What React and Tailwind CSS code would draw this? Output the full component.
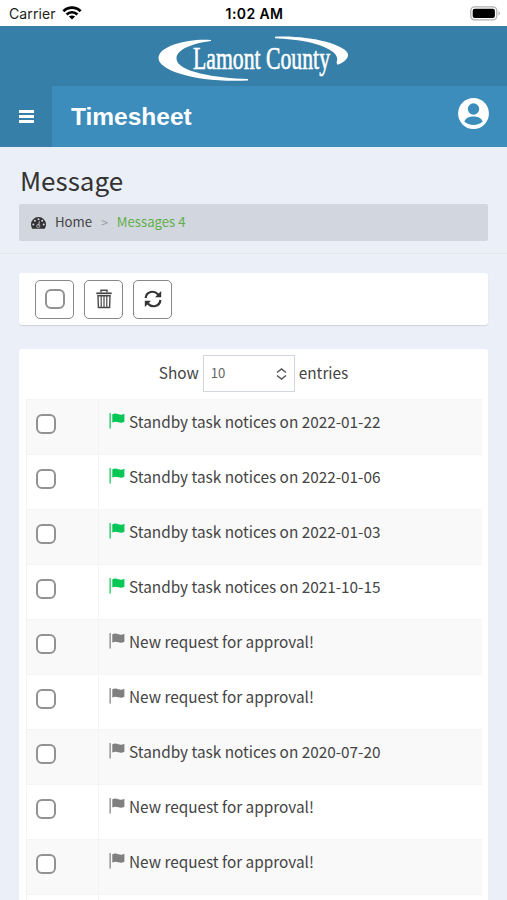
import React from "react";

const messages = [
  { text: "Standby task notices on 2022-01-22", unread: true },
  { text: "Standby task notices on 2022-01-06", unread: true },
  { text: "Standby task notices on 2022-01-03", unread: true },
  { text: "Standby task notices on 2021-10-15", unread: true },
  { text: "New request for approval!" },
  { text: "New request for approval!" },
  { text: "Standby task notices on 2020-07-20" },
  { text: "New request for approval!" },
  { text: "New request for approval!" },
];

function Wifi() {
  return (
    <svg width="20" height="14" viewBox="0 0 20 14" fill="none" stroke="#000" strokeWidth="2.7">
      <path d="M1.4 5.3C6.2 .4 13.8 .4 18.6 5.3" />
      <path d="M4.6 8.5c3-3 7.8-3 10.8 0" />
      <path d="M10 13.6 6.9 10.6c1.8-1.6 4.4-1.6 6.2 0z" fill="#000" stroke="none" />
    </svg>
  );
}

function Battery() {
  return (
    <svg width="31" height="15" viewBox="0 0 31 15">
      <rect x=".8" y=".8" width="26" height="13" rx="3.8" fill="#fff" stroke="#b0b0b0" strokeWidth="1.3" />
      <rect x="2.7" y="2.7" width="22.2" height="9.2" rx="2" fill="#000" />
      <path d="M28.5 5.2c2 .9 2 3.3 0 4.2z" fill="#b0b0b0" />
    </svg>
  );
}

function Logo() {
  return (
    <svg width="192" height="51" viewBox="0 0 192 51" fill="#fff" className="overflow-visible">
      <path d="M53 5C34 3 .5 10 .5 23C.5 36 40 48 90 45.500V44C58 43 18.500 37 18.500 23.500C18.500 14 36 8 53 6Z" />
      <path d="M117 1.700C150 0 187 9 190 19C190.500 23 187 27 179.500 29.800L178.500 27.500C184 17 162 5 117 3.200Z" />
      <text
        x="35"
        y="34.200"
        textLength="137"
        lengthAdjust="spacingAndGlyphs"
        fontSize="31"
        fontFamily="'Liberation Serif', serif"
        stroke="#fff"
        strokeWidth=".6"
      >
        Lamont County
      </text>
    </svg>
  );
}

function UserCircle() {
  return (
    <svg width="31" height="31" viewBox="0 0 31 31">
      <circle cx="15.500" cy="15.500" r="15.400" fill="#fff" />
      <circle cx="15.500" cy="11" r="5.700" fill="#3c8dbc" />
      <path d="M6.300 23.500C8 19.800 11.500 18.600 15.500 18.600s7.500 1.200 9.200 4.900c-4.500 4.600-13.900 4.600-18.400 0z" fill="#3c8dbc" />
    </svg>
  );
}

function Gauge() {
  return (
    <svg width="15" height="12" viewBox="0 0 15 12">
      <path d="M7.500 0A7.400 7.400 0 0 0 0 7.400c0 1.500.4 2.800 1.100 4q.2.400.6.400h11.600q.4 0 .6-.4c.7-1.200 1.100-2.500 1.100-4A7.400 7.400 0 0 0 7.500 0z" fill="#333" />
      <g fill="#d2d6de">
        <circle cx="2.300" cy="7.500" r="1" />
        <circle cx="3.900" cy="3.700" r="1" />
        <circle cx="7.500" cy="2.200" r="1" />
        <circle cx="11.200" cy="3.700" r="1" />
        <circle cx="12.700" cy="7.500" r="1" />
      </g>
      <path d="M8.500 4.300 7.500 8.500" stroke="#d2d6de" strokeWidth=".9" />
      <circle cx="7.300" cy="9" r="1.600" fill="none" stroke="#d2d6de" strokeWidth=".7" />
    </svg>
  );
}

function Trash() {
  return (
    <svg width="16" height="20" viewBox="0 0 16 20" fill="none" stroke="#4a4a4a" strokeWidth="1.400">
      <path d="M5 3.500V1.200h6v2.300" />
      <path d="M.3 4.300h15.400" strokeWidth="1.800" />
      <path d="M2 6.700h12l-.4 11.800h-11.200z" />
      <path d="M5.200 7v11M8 7v11M10.800 7v11" strokeWidth="1.200" />
    </svg>
  );
}

function Refresh() {
  return (
    <svg width="18" height="18" viewBox="0 0 18 18" fill="none" stroke="#333" strokeWidth="2.200">
      <path d="M1.600 8C2.400 1.200 10 -.1 14.200 4.600" />
      <path d="M16.400 10C15.600 16.800 8 18.100 3.800 13.400" />
      <path d="M17.200 1v6.200h-6.200z" fill="#333" stroke="none" />
      <path d="M.8 17v-6.200h6.200z" fill="#333" stroke="none" />
    </svg>
  );
}

function Flag({ unread }) {
  return (
    <svg width="16" height="16" viewBox="0 0 16 16" className={unread ? "text-[#06c755]" : "text-[#808080]"} fill="currentColor">
      <rect x=".4" y="0" width="1.500" height="15.600" opacity=".8" />
      <path d="M3.300 1.300C5.500.2 7.500.5 9.300 1.200c2 .7 4 .7 6.100-.4v8c-2 1.100-4.100 1.100-6.100.4-1.800-.7-3.800-.8-6 .2z" />
    </svg>
  );
}

function Checkbox() {
  return <span className="block size-5 shrink-0 rounded-[6px] border-2 border-[#929292] bg-white" />;
}

function ToolButton({ children, label }) {
  return (
    <button aria-label={label} className="flex size-[39px] items-center justify-center rounded-[5px] border border-[#888] bg-white">
      {children}
    </button>
  );
}

export default function App() {
  return (
    <div className="flex h-[900px] w-[507px] flex-col overflow-hidden bg-[#ebeff7] font-['Noto_Sans_CJK_SC','Noto_Sans',sans-serif] text-[#444]">
      <div className="grid h-[26px] shrink-0 grid-cols-3 items-center bg-white pr-[6px] pl-[9px] font-[Inter,sans-serif] text-[14px] text-[#222]">
        <div className="flex items-center gap-[6px]">
          <span className="tracking-[0.1px]">Carrier</span>
          <Wifi />
        </div>
        <span className="pr-px text-center font-semibold tracking-[0.4px] whitespace-nowrap text-black">1:02 AM</span>
        <div className="flex justify-end">
          <Battery />
        </div>
      </div>

      <header className="shrink-0 bg-[#367fa9]">
        <div className="flex h-[60px] justify-center pt-[9px]">
          <Logo />
        </div>
        <div className="flex h-[61px]">
          <button aria-label="Menu" className="flex w-[52px] flex-col items-center justify-center gap-[2px]">
            <span className="h-[3px] w-[15px] bg-white" />
            <span className="h-[3px] w-[15px] bg-white" />
            <span className="h-[3px] w-[15px] bg-white" />
          </button>
          <div className="flex flex-1 items-center justify-between bg-[#3c8dbc] pr-[18px] pl-[19px]">
            <span className="pt-px font-['Liberation_Sans',sans-serif] text-[24.5px] leading-none font-bold text-white">Timesheet</span>
            <div className="pb-[6px]">
              <UserCircle />
            </div>
          </div>
        </div>
      </header>

      <section className="h-[107px] shrink-0 border-b border-[#e4e8ec] px-[19px] pt-[15px]">
        <h1 className="pl-px text-[26px] leading-[36px] text-[#333]">Message</h1>
        <nav className="mt-[6px] flex h-[37px] items-center rounded-[2px] bg-[#d2d6de] pl-[12px] text-[13.2px] leading-[20px]">
          <Gauge />
          <span className="-mt-[2px] ml-[9px]">Home</span>
          <span className="-mt-[2px] ml-[9px] text-[12px] text-[#999ca5]">&gt;</span>
          <span className="-mt-[2px] ml-[9px] text-[#5fb04b]">Messages 4</span>
        </nav>
      </section>

      <main className="flex flex-1 flex-col px-[19px] pt-[19px]">
        <div className="flex h-[52px] shrink-0 items-center gap-[10px] rounded-[3px] bg-white pl-[16px] shadow-[0_1px_1px_rgba(0,0,0,0.12)]">
          <ToolButton label="Select all">
            <Checkbox />
          </ToolButton>
          <ToolButton label="Delete">
            <Trash />
          </ToolButton>
          <ToolButton label="Refresh">
            <Refresh />
          </ToolButton>
        </div>

        <div className="mt-[24px] flex-1 rounded-t-[3px] bg-white pt-[6px] pr-[6px] pl-[7px]">
          <div className="flex h-[37px] items-center justify-center gap-[4px] pr-px text-[15.35px] leading-[24px]">
            <span className="-mt-[4px]">Show</span>
            <div className="flex h-[37px] w-[92px] items-center justify-between border border-[#d2d6de] pr-[7px] pl-[7px] text-[13.2px] text-[#666]">
              <span className="-mt-px">10</span>
              <svg width="11" height="12" viewBox="0 0 11 12" fill="none" stroke="#555" strokeWidth="1.500">
                <path d="M1 4.500 5.500 1 10 4.500M1 7.500 5.500 11 10 7.500" />
              </svg>
            </div>
            <span className="-mt-[4px]">entries</span>
          </div>

          <div className="mt-[7px]">
            {messages.map((m, i) => (
              <div key={i} className="flex h-[55px] border-t border-l border-[#f4f4f4] odd:bg-[#f9f9f9]">
                <div className="w-[72px] border-r border-[#f4f4f4] pt-[14px] pl-[9px]">
                  <Checkbox />
                </div>
                <div className="flex items-start gap-[4px] pl-[10px] text-[15.35px] leading-[24px]">
                  <div className="pt-[13px]">
                    <Flag unread={m.unread} />
                  </div>
                  <span className="pt-[9px] whitespace-nowrap">{m.text}</span>
                </div>
              </div>
            ))}
            <div className="h-[6px] border-t border-l border-[#f4f4f4]">
              <div className="h-full w-[72px] border-r border-[#f4f4f4]" />
            </div>
          </div>
        </div>
      </main>
    </div>
  );
}
